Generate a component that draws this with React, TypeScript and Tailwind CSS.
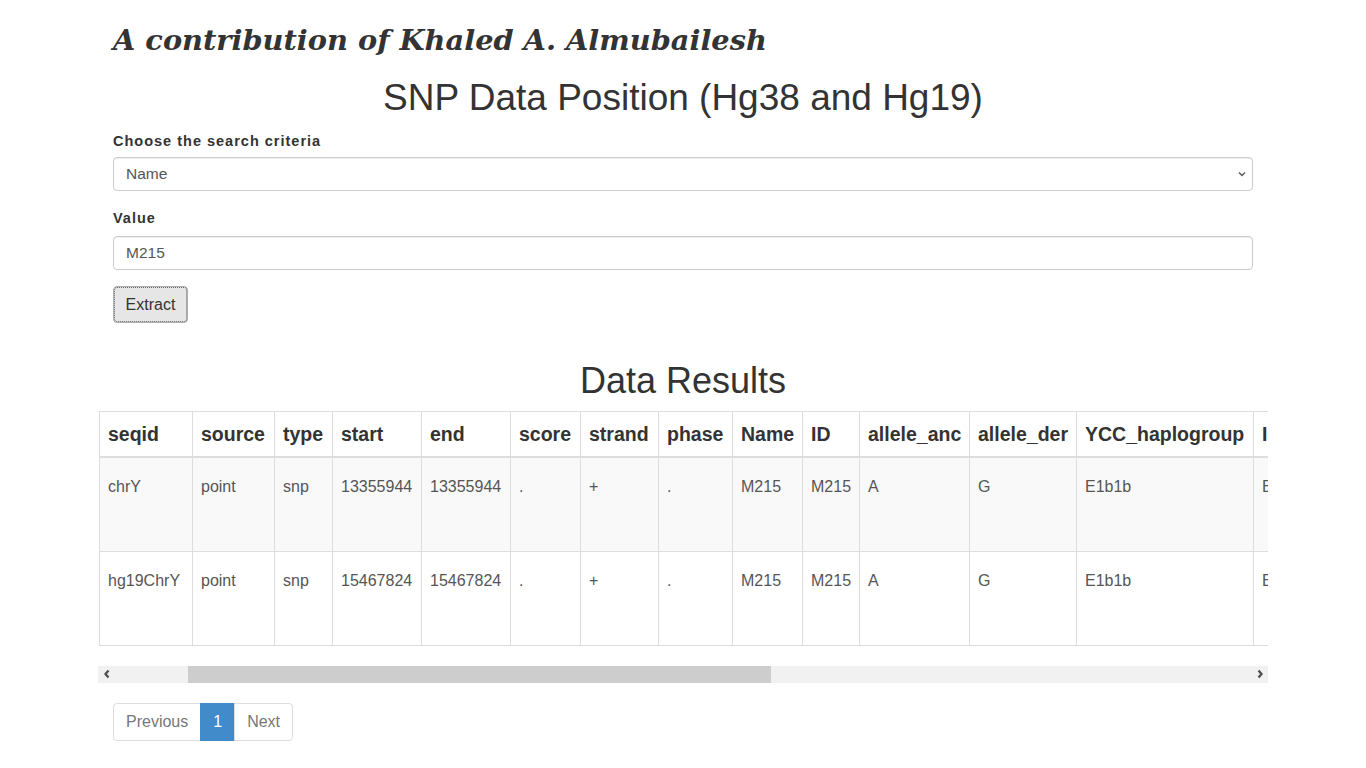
import React from 'react';

type Col = { key: string; w: string };

// column widths read off the reference (border to border)
const COLUMNS: Col[] = [
  { key: 'seqid', w: 'w-[93px]' },
  { key: 'source', w: 'w-[82px]' },
  { key: 'type', w: 'w-[58px]' },
  { key: 'start', w: 'w-[89px]' },
  { key: 'end', w: 'w-[89px]' },
  { key: 'score', w: 'w-[70px]' },
  { key: 'strand', w: 'w-[78px]' },
  { key: 'phase', w: 'w-[74px]' },
  { key: 'Name', w: 'w-[70px]' },
  { key: 'ID', w: 'w-[57px]' },
  { key: 'allele_anc', w: 'w-[110px]' },
  { key: 'allele_der', w: 'w-[107px]' },
  { key: 'YCC_haplogroup', w: 'w-[177px]' },
  { key: 'ISOGG_haplogroup', w: 'w-[200px]' },
];

const ROWS: string[][] = [
  ['chrY', 'point', 'snp', '13355944', '13355944', '.', '+', '.', 'M215', 'M215', 'A', 'G', 'E1b1b', 'E1b1b1'],
  ['hg19ChrY', 'point', 'snp', '15467824', '15467824', '.', '+', '.', 'M215', 'M215', 'A', 'G', 'E1b1b', 'E1b1b1'],
];

function Chevron({ dir }: { dir: 'left' | 'right' | 'down' }) {
  if (dir === 'down') {
    return (
      <svg width="10" height="10" viewBox="0 0 10 10" className="text-[#555]">
        <polyline points="2,3.5 5,6.5 8,3.5" fill="none" stroke="currentColor" strokeWidth="1.4" />
      </svg>
    );
  }
  return (
    <svg width="8" height="10" viewBox="0 0 8 10" className="text-[#505050]">
      <polyline
        points={dir === 'left' ? '5.5,1.5 2.5,5 5.5,8.5' : '2.5,1.5 5.5,5 2.5,8.5'}
        fill="none"
        stroke="currentColor"
        strokeWidth="2.3"
      />
    </svg>
  );
}

export default function App() {
  return (
    <div className="min-h-screen bg-white text-[#333] font-['Liberation_Sans',Arial,sans-serif] text-sm">
      <div className="w-[1170px] mx-auto">
        <div className="px-[15px]">
          <h3 className="pt-[22px] h-[56px] text-[28.8px] leading-[36px] font-bold italic font-['DejaVu_Serif',Georgia,serif] text-[#333]">
            A contribution of Khaled A. Almubailesh
          </h3>
          <h1 className="mt-[22px] text-[37px] leading-[40px] text-center text-[#333]">
            SNP Data Position (Hg38 and Hg19)
          </h1>

          <div className="mt-[13px]">
            <label className="block font-bold text-[14.5px] tracking-[1px] leading-[20px] h-[20px]">
              Choose the search criteria
            </label>
            <div className="relative mt-[6px]">
              <select
                defaultValue="Name"
                className="appearance-none w-full h-[34px] px-3 border border-[#ccc] rounded-[4px] bg-white text-[#555] text-[15.5px] shadow-[inset_0_1px_1px_rgba(0,0,0,0.075)] outline-none"
              >
                <option>Name</option>
                <option>ID</option>
                <option>start</option>
              </select>
              <span className="absolute right-[6px] top-[12px] pointer-events-none">
                <Chevron dir="down" />
              </span>
            </div>
          </div>

          <div className="mt-[17px]">
            <label className="block font-bold text-[14.5px] tracking-[1px] leading-[20px] h-[20px]">Value</label>
            <input
              defaultValue="M215"
              className="mt-[8px] block w-full h-[34px] px-3 border border-[#ccc] rounded-[4px] bg-white text-[#555] text-[15.5px] shadow-[inset_0_1px_1px_rgba(0,0,0,0.075)] outline-none"
            />
          </div>

          <button className="mt-[16px] h-[37px] w-[75px] bg-[#e6e6e6] border border-[#adadad] rounded-[4px] text-[#333] text-base outline-1 outline-dotted outline-[#666] -outline-offset-2">
            Extract
          </button>

          <h2 className="mt-[38px] text-[36px] leading-[40px] text-center text-[#333]">Data Results</h2>
        </div>

        <div className="mt-[10px] w-[1170px] overflow-hidden">
          <table className="ml-px table-fixed border-collapse w-[1254px] text-base">
            <thead>
              <tr>
                {COLUMNS.map((c) => (
                  <th
                    key={c.key}
                    className={`${c.w} text-left font-bold text-[19.5px] leading-[28px] px-2 pt-[8px] pb-[8px] border border-[#ddd] border-b-2 whitespace-nowrap overflow-hidden`}
                  >
                    {c.key}
                  </th>
                ))}
              </tr>
            </thead>
            <tbody>
              {ROWS.map((row, i) => (
                <tr key={i} className={i === 0 ? 'bg-[#f9f9f9]' : 'bg-white'}>
                  {row.map((v, j) => (
                    <td
                      key={j}
                      className="h-[94px] align-top px-2 pt-[17px] leading-[23px] text-[#555] border border-[#ddd] whitespace-nowrap overflow-hidden"
                    >
                      {v}
                    </td>
                  ))}
                </tr>
              ))}
            </tbody>
          </table>

          <div className="mt-[20px] h-[17px] bg-[#f1f1f1] flex items-center">
            <div className="w-[17px] h-[17px] flex items-center justify-center">
              <Chevron dir="left" />
            </div>
            <div className="ml-[73px] w-[583px] h-[17px] bg-[#cdcdcd]" />
            <div className="flex-1" />
            <div className="w-[17px] h-[17px] flex items-center justify-center">
              <Chevron dir="right" />
            </div>
          </div>
        </div>

        <div className="px-[15px] pt-[20px] pb-[26px]">
          <ul className="flex text-base leading-[22px]">
            <li className="px-3 py-[7px] border border-[#ddd] rounded-l-[4px] text-[#777] bg-white">Previous</li>
            <li className="px-3 py-[7px] border border-[#428bca] bg-[#428bca] text-white -ml-px">1</li>
            <li className="px-3 py-[7px] border border-[#ddd] rounded-r-[4px] text-[#777] bg-white -ml-px">Next</li>
          </ul>
        </div>
      </div>
    </div>
  );
}
